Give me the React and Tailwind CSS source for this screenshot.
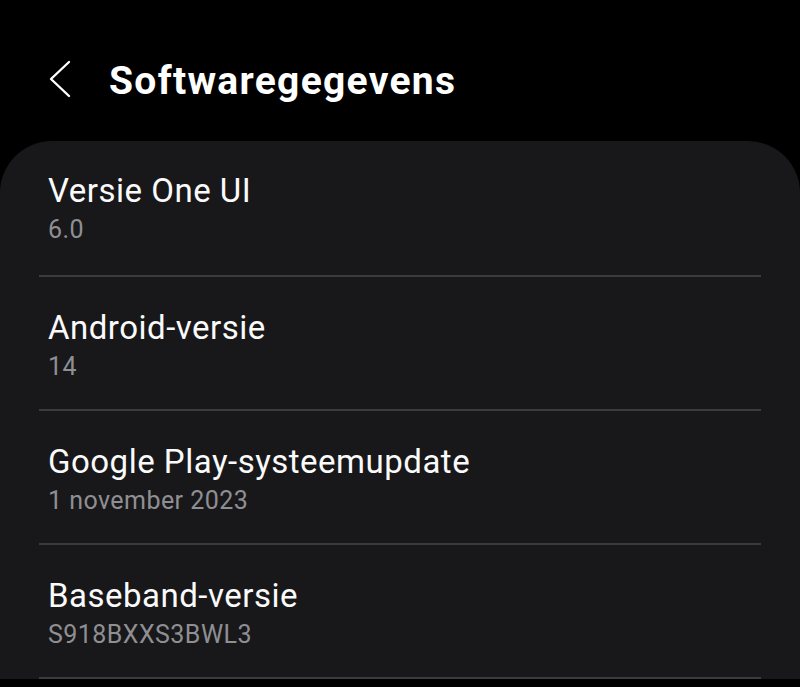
const items = [
  { title: 'Versie One UI', value: '6.0' },
  { title: 'Android-versie', value: '14' },
  { title: 'Google Play-systeemupdate', value: '1 november 2023' },
  { title: 'Baseband-versie', value: 'S918BXXS3BWL3' },
]

function BackChevron() {
  return (
    <svg width="22" height="38" viewBox="0 0 22 38" fill="none" className="mt-[3px] shrink-0">
      <polyline points="20,2 2,19 20,36" stroke="white" strokeWidth="2.4" strokeLinecap="round" strokeLinejoin="round" />
    </svg>
  )
}

export default function App() {
  return (
    <div className="w-[800px] h-[687px] overflow-hidden bg-black" style={{ fontFamily: 'Roboto, "Noto Sans", sans-serif' }}>
      <div className="h-[141px] flex items-start pt-[57px] pl-[49px]">
        <BackChevron />
        <h1 className="ml-[38px] text-[39px] leading-[48px] font-bold text-white tracking-[1.3px]">Softwaregegevens</h1>
      </div>
      <div className="bg-[#18181a] rounded-t-[52px] px-[39px]">
        {items.map((item, i) => (
          <div key={item.title} className="border-b-2 border-[#3b3b3d]">
            <div className={i === 0 ? 'h-[134px] pt-[30px] px-[9px]' : 'h-[132px] pt-[31px] px-[9px]'}>
              <div className="text-[33px] leading-[40px] text-[#fafafa] tracking-[0.5px]">{item.title}</div>
              <div className="mt-[4px] text-[25px] leading-[30px] text-[#8f8f93] tracking-[0.45px]">{item.value}</div>
            </div>
          </div>
        ))}
      </div>
    </div>
  )
}
